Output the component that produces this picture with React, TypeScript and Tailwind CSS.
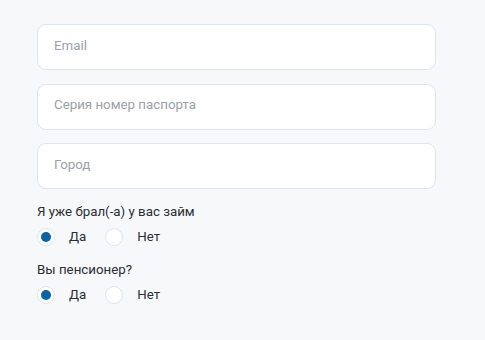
import React from "react";

interface Field {
  placeholder: string;
}

const Fields: Field[] = [
  { placeholder: "Email" },
  { placeholder: "Серия номер паспорта" },
  { placeholder: "Город" },
];

const Radio = ({ checked, label }: { checked: boolean; label: string }) => {
  return (
    <label className="flex items-center gap-[14px]">
      <span className="w-[18px] h-[18px] rounded-full bg-white border border-[#dbe5ef] flex items-center justify-center">
        {checked ? <span className="w-[10px] h-[10px] rounded-full bg-[#0b63a5]" /> : null}
      </span>
      <span className="text-[13.3px] text-[#2b2f33]">{label}</span>
    </label>
  );
};

const Question = ({ title }: { title: string }) => {
  return (
    <div className="flex flex-col">
      <p className="text-[13.3px] leading-[16px] text-[#2b2f33]">{title}</p>
      <div className="flex items-center gap-[19px] mt-[7px]">
        <Radio checked label="Да" />
        <Radio checked={false} label="Нет" />
      </div>
    </div>
  );
};

export default function App() {
  return (
    <div className="w-[485px] h-[340px] bg-[#f6f8fa] overflow-hidden font-['Roboto',sans-serif]">
      <div className="w-[399px] ml-[37px] pt-[24px] flex flex-col">
        <div className="flex flex-col gap-[13.5px]">
          {Fields.map((f, id) => (
            <input
              key={id}
              placeholder={f.placeholder}
              className="w-full h-[46px] rounded-[9px] bg-white border border-[#dde6ef] px-[16px] pb-[4px] text-[13.3px] placeholder:text-[#9aa1a9] outline-none"
            />
          ))}
        </div>
        <div className="mt-[15px] flex flex-col gap-[15px]">
          <Question title="Я уже брал(-а) у вас займ" />
          <Question title="Вы пенсионер?" />
        </div>
      </div>
    </div>
  );
}
